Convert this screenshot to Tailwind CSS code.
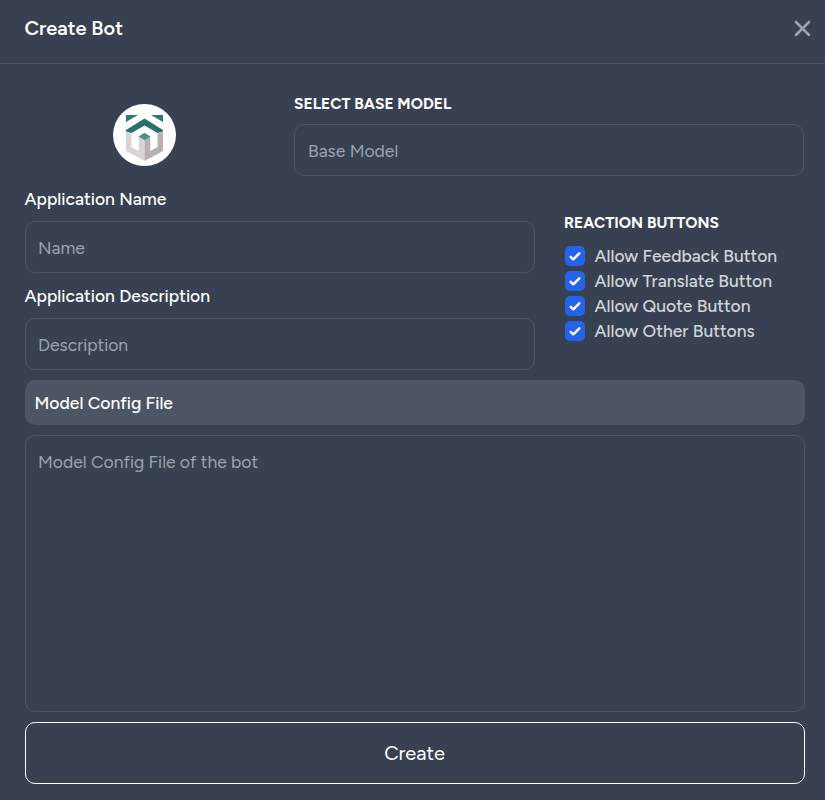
<!DOCTYPE html>
<html lang="en">
<head>
<meta charset="utf-8">
<title>Create Bot</title>
<script src="https://cdn.jsdelivr.net/npm/@tailwindcss/browser@4"></script>
</head>
<body class="h-[800px] w-[825px] overflow-hidden bg-[#374151] font-['Figtree','Lato',sans-serif] text-[17.5px] leading-[25px] text-white">
<header class="flex h-16 items-center justify-between border-b border-[#4b5563] pr-[14px] pb-[7px] pl-[24.5px]">
  <h1 class="text-[20px] font-semibold">Create Bot</h1>
  <button aria-label="Close" class="size-[17px]"><svg viewBox="0 0 17 17" class="size-[17px]" fill="none" stroke="#9ca3af" stroke-width="2.6" stroke-linecap="round"><path d="M2 2 15 15M15 2 2 15"/></svg></button>
</header>
<main class="flex flex-col pr-[20px] pl-[25px]">
  <section class="flex h-[122px] pr-px">
    <div class="w-[269px] pt-[40px] pl-[88px]">
      <svg viewBox="0 0 63 62" class="h-[62px] w-[63px]">
        <ellipse cx="31.5" cy="31" rx="31.5" ry="31" fill="#fff"/>
        <path d="M13 11h12L13 18zM50 11H38L50 18z" fill="#2d7a70"/>
        <path d="M13 26 31.500 14.500 50 26v1.500L44.500 29 31.500 21.500 18.500 29 13 27.500z" fill="#2b7069"/>
        <path d="m13 27.500 5.500 2V43l7.200 4V32.500l5.800 3.500v21L13 47z" fill="#dcd4d4"/>
        <path d="m50 27.500-5.500 2V43l-7.200 4V32.500L31.500 36v21L50 47z" fill="#b9afaf"/>
        <path d="m25.500 32.500 6-3.800 6 3.800-6 3.800z" fill="#4b9482"/>
      </svg>
    </div>
    <div class="flex-1 pt-[27px]">
      <h2 class="text-[15.5px] font-bold tracking-[0.05px]">SELECT BASE MODEL</h2>
      <div class="mt-[8px] flex h-[52px] items-center rounded-[10px] border border-[#4b5563] px-[13px] text-[#9ca3af]">Base Model</div>
    </div>
  </section>
  <section class="flex h-[194px]">
    <div class="w-[510px]">
      <label class="-ml-[0.5px] block h-[35px] font-medium">Application Name</label>
      <div class="flex h-[52px] items-center rounded-[10px] border border-[#4b5563] px-[12px] text-[#9ca3af]">Name</div>
      <label class="mt-[10px] -ml-[0.5px] block h-[35px] font-medium">Application Description</label>
      <div class="flex h-[52px] items-center rounded-[10px] border border-[#4b5563] px-[12px] text-[#9ca3af]">Description</div>
    </div>
    <div class="pt-[24px] pl-[29px]">
      <h2 class="text-[15.5px] font-bold tracking-[0.05px]">REACTION BUTTONS</h2>
      <ul class="mt-[8px] ml-px font-medium text-[#d1d5db]">
        <li class="flex h-[25px] items-start gap-[9.5px]"><svg viewBox="0 0 20 20" class="mt-[3px] size-5"><rect width="20" height="20" rx="5" fill="#2563eb"/><path d="m5.700 10.800 2.600 2.500 6-6" fill="none" stroke="#fff" stroke-width="2.500" stroke-linecap="round" stroke-linejoin="round"/></svg><span>Allow Feedback Button</span></li>
        <li class="flex h-[25px] items-start gap-[9.5px]"><svg viewBox="0 0 20 20" class="mt-[3px] size-5"><rect width="20" height="20" rx="5" fill="#2563eb"/><path d="m5.700 10.800 2.600 2.500 6-6" fill="none" stroke="#fff" stroke-width="2.500" stroke-linecap="round" stroke-linejoin="round"/></svg><span>Allow Translate Button</span></li>
        <li class="flex h-[25px] items-start gap-[9.5px]"><svg viewBox="0 0 20 20" class="mt-[3px] size-5"><rect width="20" height="20" rx="5" fill="#2563eb"/><path d="m5.700 10.800 2.600 2.500 6-6" fill="none" stroke="#fff" stroke-width="2.500" stroke-linecap="round" stroke-linejoin="round"/></svg><span>Allow Quote Button</span></li>
        <li class="flex h-[25px] items-start gap-[9.5px]"><svg viewBox="0 0 20 20" class="mt-[3px] size-5"><rect width="20" height="20" rx="5" fill="#2563eb"/><path d="m5.700 10.800 2.600 2.500 6-6" fill="none" stroke="#fff" stroke-width="2.500" stroke-linecap="round" stroke-linejoin="round"/></svg><span>Allow Other Buttons</span></li>
      </ul>
    </div>
  </section>
  <div class="flex h-[45px] items-center rounded-[10px] bg-[#4b5563] px-[9.500px] pb-px font-medium">Model Config File</div>
  <div class="mt-[10px] h-[277px] rounded-[10px] border border-[#4b5563] px-[12px] pt-[13px] text-[#9ca3af]">Model Config File of the bot</div>
  <button class="mt-[10px] h-[62px] rounded-[10px] border border-white pr-px text-[20px] text-white">Create</button>
</main>
</body>
</html>
